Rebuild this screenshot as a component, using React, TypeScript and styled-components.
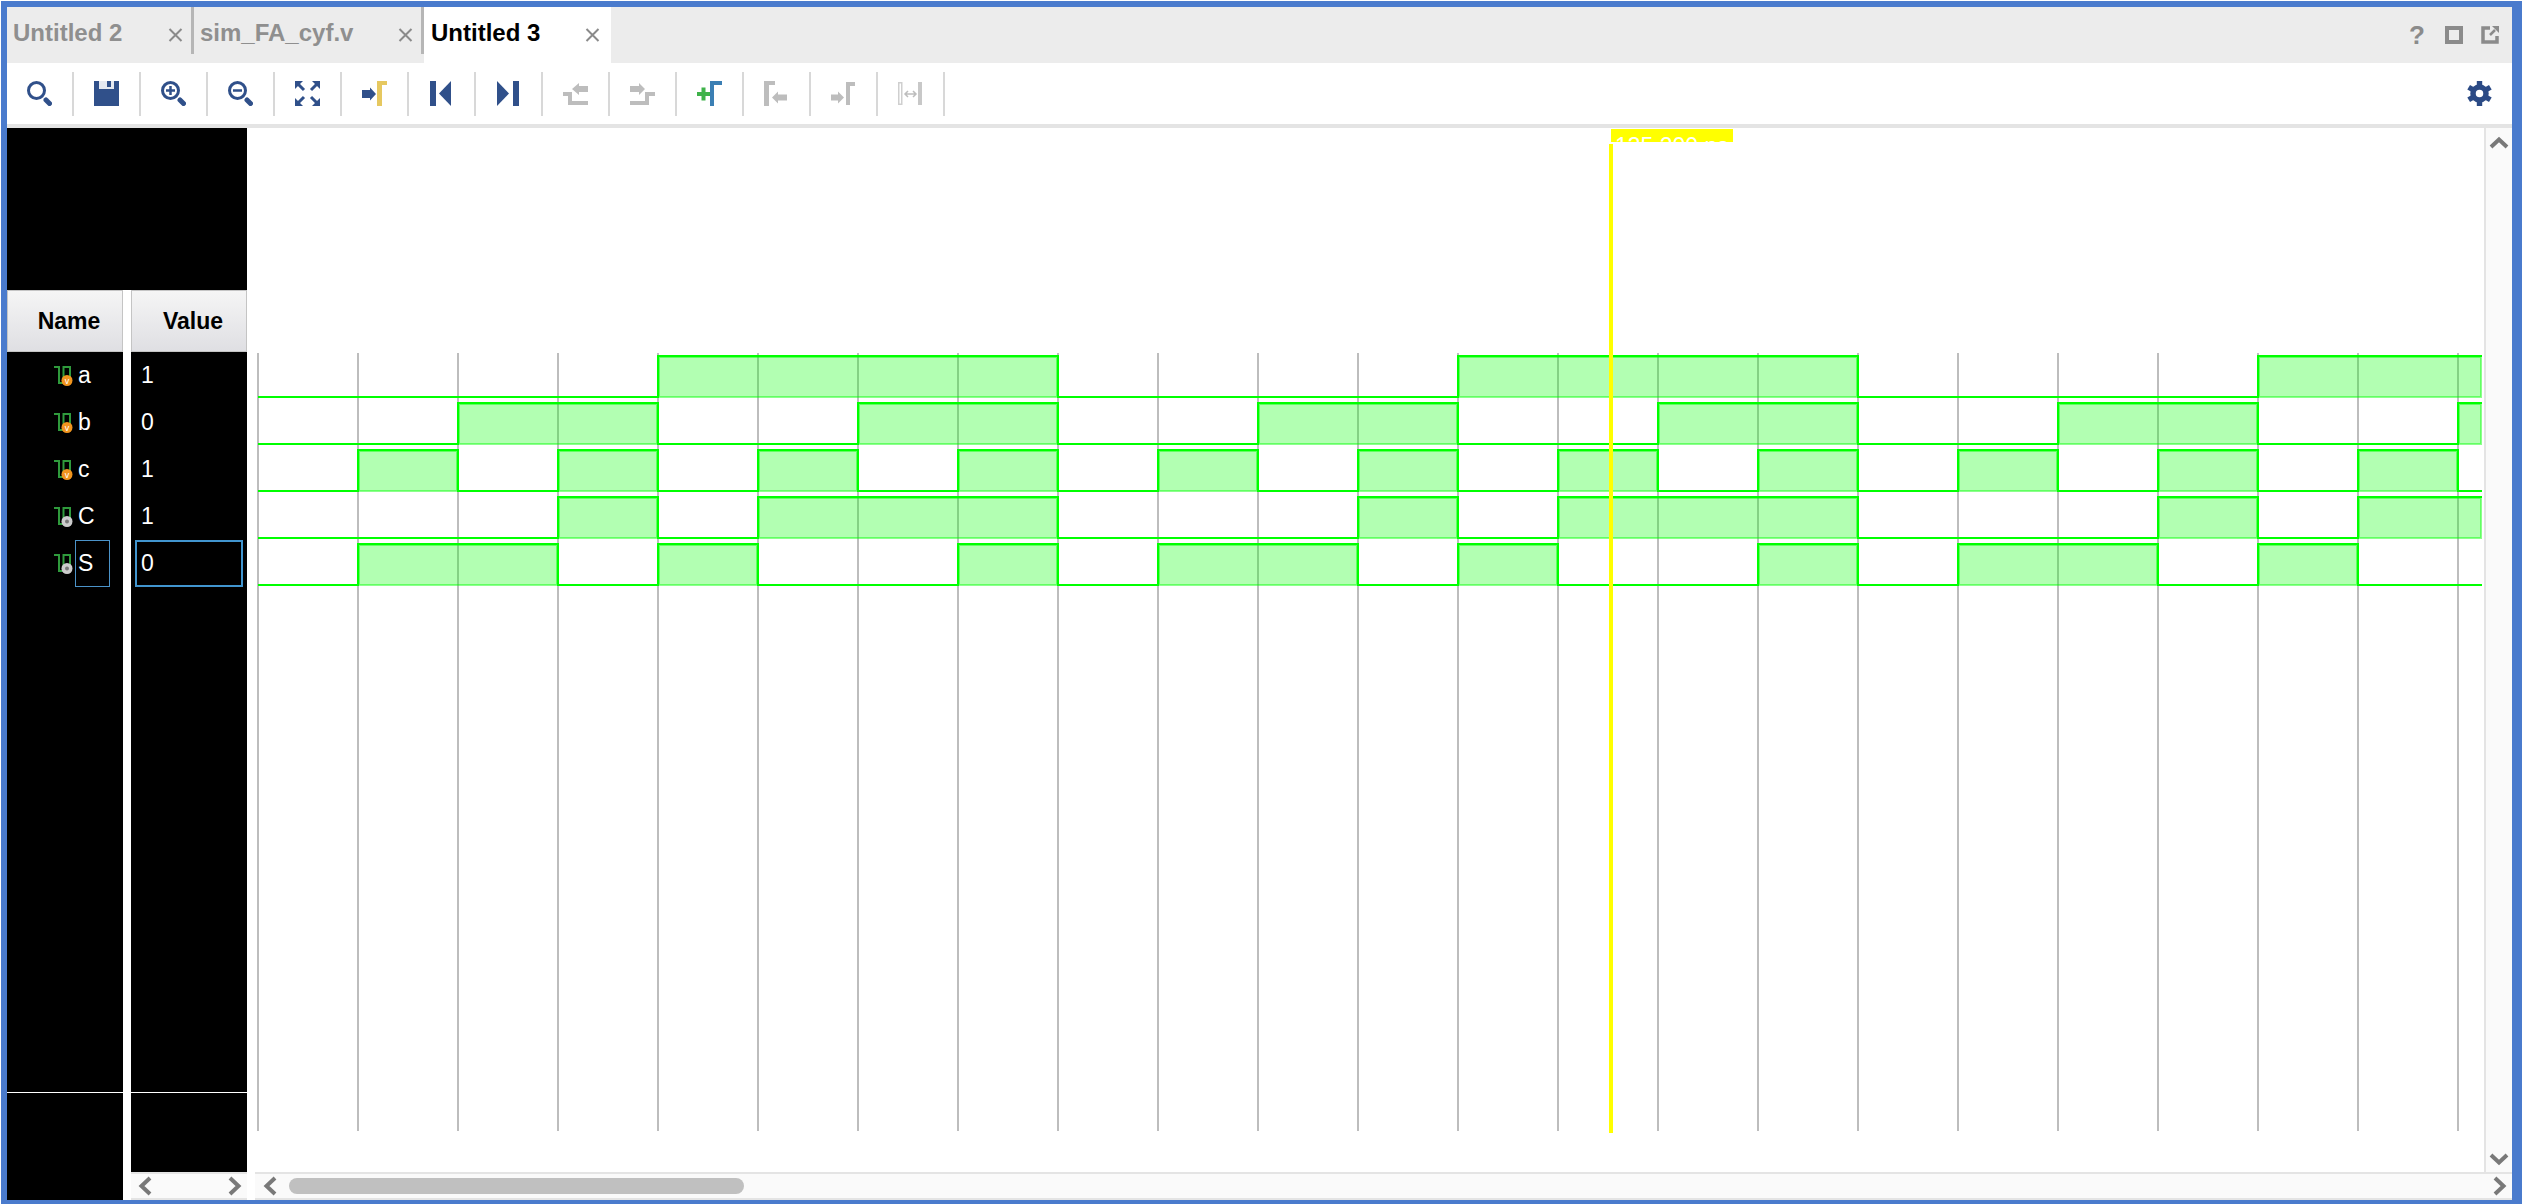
import React from 'react';
import styled, { createGlobalStyle } from 'styled-components';

const NAVY = '#30508a';
const GREY = '#bdbdbd';

const GlobalStyle = createGlobalStyle`
  html, body {
    margin: 0;
    background: #fff;
  }
  body {
    font-family: "Liberation Sans", Arial, sans-serif;
  }
`;

const Frame = styled.div`
  box-sizing: border-box;
  display: flex;
  flex-direction: column;
  width: 2521px;
  height: 1203px;
  margin: 1px 0 0 1px;
  border: solid #4a7bcd;
  border-width: 6px 10px 4px 6px;
  overflow: hidden;
`;

const TabBar = styled.div`
  display: flex;
  align-items: flex-start;
  height: 56px;
  flex: none;
  background: #ececec;
`;

const Tab = styled.div<{ $width: number; $active?: boolean; $pad: number }>`
  box-sizing: border-box;
  display: flex;
  align-items: center;
  width: ${(p) => p.$width}px;
  height: 56px;
  padding: 0 ${(p) => (p.$active ? 11 : 8)}px 0 ${(p) => p.$pad}px;
  background: ${(p) => (p.$active ? '#fff' : 'transparent')};
  color: ${(p) => (p.$active ? '#000' : '#8f8f8f')};
  font-size: 24px;
  font-weight: 700;
`;

const TabLabel = styled.span`
  flex: 1;
  margin-bottom: 4px;
  white-space: nowrap;
`;

const TabDivider = styled.div`
  width: 3px;
  height: 47px;
  flex: none;
  background: #b6b6b6;
`;

const WindowTools = styled.div`
  display: flex;
  align-items: center;
  gap: 18px;
  height: 56px;
  margin-left: auto;
  padding-right: 13px;
  color: #8b8b8b;
`;

const HelpMark = styled.span`
  width: 18px;
  margin-right: 1px;
  font-size: 26px;
  font-weight: 700;
  line-height: 18px;
  text-align: center;
`;

const Toolbar = styled.div`
  display: flex;
  align-items: center;
  height: 61px;
  flex: none;
  padding-right: 20px;
  background: #fff;
  border-bottom: 4px solid #e4e4e4;
`;

const ToolButton = styled.div`
  display: flex;
  align-items: center;
  justify-content: center;
  width: 65px;
  height: 61px;
  flex: none;
`;

const ToolSeparator = styled.div`
  width: 2px;
  height: 44px;
  flex: none;
  background: #d8d8d8;
`;

const Settings = styled.div`
  display: flex;
  margin-left: auto;
`;

const Main = styled.div`
  display: flex;
  flex: 1;
  min-height: 0;
`;

const SignalPanel = styled.div`
  display: flex;
  flex-direction: column;
  width: 240px;
  flex: none;
`;

const BlackBlock = styled.div`
  height: 162px;
  flex: none;
  background: #000;
`;

const Columns = styled.div`
  display: flex;
  justify-content: space-between;
  flex: 1;
`;

const ColumnWrap = styled.div`
  display: flex;
  flex-direction: column;
  width: 116px;
`;

const Column = styled.div`
  display: flex;
  flex-direction: column;
  flex: 1;
  background: #000;
  color: #fff;
  font-size: 23px;
`;

const ColumnHeader = styled.div`
  box-sizing: border-box;
  display: flex;
  align-items: center;
  justify-content: center;
  height: 62px;
  flex: none;
  padding-left: 8px;
  border: 1px solid #c4c4c4;
  background: linear-gradient(#f5f5f5, #dfdfe3);
  color: #000;
  font-size: 23px;
  font-weight: 700;
`;

const ColumnFoot = styled.div<{ $height: number }>`
  box-sizing: border-box;
  height: ${(p) => p.$height}px;
  margin-top: auto;
  border-top: 1px solid #fff;
`;

const NameRow = styled.div`
  display: flex;
  align-items: center;
  height: 47px;
  padding-left: 47px;
`;

const SignalGlyph = styled.svg`
  display: block;
  width: 21px;
  height: 21px;
  flex: none;
`;

const NameLabel = styled.div<{ $selected?: boolean }>`
  box-sizing: border-box;
  display: flex;
  align-items: center;
  width: 35px;
  height: 47px;
  padding-left: 2px;
  border: 1px solid ${(p) => (p.$selected ? '#4b93c9' : 'transparent')};
`;

const ValueCell = styled.div<{ $selected?: boolean }>`
  box-sizing: border-box;
  display: flex;
  align-items: center;
  width: 108px;
  height: 47px;
  margin-left: 4px;
  padding-left: 4px;
  border: 2px solid ${(p) => (p.$selected ? '#4195cf' : 'transparent')};
`;

const WavePanel = styled.div`
  display: flex;
  flex-direction: column;
  flex: 1;
  min-width: 0;
`;

const WaveRow = styled.div`
  display: flex;
  flex: 1;
  min-height: 0;
`;

const WaveCanvas = styled.svg`
  display: block;
  width: 2237px;
  height: 1044px;
  flex: none;
`;

const VScroll = styled.div`
  box-sizing: border-box;
  display: flex;
  flex-direction: column;
  align-items: center;
  justify-content: space-between;
  flex: 1;
  padding: 8px 0 6px;
  border-left: 2px solid #e4e4e4;
  background: #fafafa;
`;

const HScroll = styled.div<{ $inset: number }>`
  box-sizing: border-box;
  display: flex;
  align-items: center;
  justify-content: space-between;
  height: 28px;
  flex: none;
  margin-left: ${(p) => p.$inset}px;
  padding: 0 5px 0 ${(p) => (p.$inset ? 8 : 7)}px;
  border: solid #e4e4e4;
  border-width: 2px 0;
  background: #fafafa;
`;

const ScrollThumb = styled.div`
  width: 455px;
  height: 16px;
  margin: 0 auto 0 12px;
  border-radius: 8px;
  background: #c0c0c0;
`;

const CloseIcon = () => (
  <svg width="15" height="14" viewBox="0 0 15 14" style={{ flex: 'none' }}>
    <path d="M1.5 1L13.5 13M13.5 1L1.5 13" stroke="#8a8a8a" strokeWidth="2" fill="none" />
  </svg>
);

const PopOutIcon = () => (
  <svg width="18" height="18" viewBox="0 0 18 18">
    <path d="M9 2H2V16H16V10" stroke="#8b8b8b" strokeWidth="3.5" fill="none" />
    <path d="M9 9L14 4" stroke="#8b8b8b" strokeWidth="2.5" />
    <path d="M11 0H18V7Z" fill="#8b8b8b" />
  </svg>
);

const SquareIcon = () => (
  <svg width="18" height="18" viewBox="0 0 18 18">
    <rect x="2" y="2" width="14" height="14" fill="none" stroke="#8b8b8b" strokeWidth="4" />
  </svg>
);

const Icon = ({ children }: { children: React.ReactNode }) => (
  <svg width="25" height="25" viewBox="0 0 25 25">
    {children}
  </svg>
);

const Lens = ({ mark }: { mark?: 'plus' | 'minus' }) => (
  <Icon>
    <circle cx="9.5" cy="9.5" r="8" fill="none" stroke={NAVY} strokeWidth="3" />
    <path d="M19 19L22.5 22.5" stroke={NAVY} strokeWidth="5" strokeLinecap="round" />
    {mark && <path d="M5 9.5H14" stroke={NAVY} strokeWidth="2.5" />}
    {mark === 'plus' && <path d="M9.5 5V14" stroke={NAVY} strokeWidth="2.5" />}
  </Icon>
);

const toolIcons: React.ReactNode[] = [
  <Lens key="search" />,
  <Icon key="save">
    <rect width="25" height="25" fill={NAVY} />
    <rect x="5" width="15" height="8" fill="#e4e8f0" />
    <rect x="13" width="4" height="6" fill={NAVY} />
  </Icon>,
  <Lens key="in" mark="plus" />,
  <Lens key="out" mark="minus" />,
  <Icon key="fit">
    <g fill={NAVY}>
      <path d="M0 0H8L0 8Z" />
      <path d="M25 0H17L25 8Z" />
      <path d="M0 25H8L0 17Z" />
      <path d="M25 25H17L25 17Z" />
    </g>
    <path d="M3 3L9 9M22 3L16 9M3 22L9 16M22 22L16 16" stroke={NAVY} strokeWidth="3" />
  </Icon>,
  <Icon key="goto">
    <path d="M0 9H8V6.5L14 13L8 19.5V17H0Z" fill={NAVY} />
    <path d="M15 0H25V4H20V25H15Z" fill="#e6c860" />
  </Icon>,
  <Icon key="first">
    <rect x="1" width="6" height="25" fill={NAVY} />
    <path d="M22 0V25L10 12.5Z" fill={NAVY} />
  </Icon>,
  <Icon key="last">
    <path d="M1 0V25L13 12.5Z" fill={NAVY} />
    <rect x="17" width="6" height="25" fill={NAVY} />
  </Icon>,
  <Icon key="prev-edge">
    <path d="M0 13H7V22H25" stroke={GREY} strokeWidth="4" fill="none" />
    <path d="M25 5H16V2L9 8L16 14V11H25Z" fill={GREY} />
  </Icon>,
  <Icon key="next-edge">
    <path d="M0 22H17V13H25" stroke={GREY} strokeWidth="4" fill="none" />
    <path d="M0 5H9V2L15 8L9 14V11H0Z" fill={GREY} />
  </Icon>,
  <Icon key="add-marker">
    <path d="M4.5 6.5H8.5V11H13V15H8.5V19.5H4.5V15H0V11H4.5Z" fill="#3fb24a" />
    <path d="M13 0H25V4H17V25H13Z" fill="#3b7fb4" />
  </Icon>,
  <Icon key="prev-marker">
    <path d="M0 0H11V4H5V25H0Z" fill={GREY} />
    <path d="M23 13.5H14V10.5L8 16.5L14 22.5V19.5H23Z" fill={GREY} />
  </Icon>,
  <Icon key="next-marker">
    <path d="M0 13.5H7V10.5L13 16.5L7 22.5V19.5H0Z" fill={GREY} />
    <path d="M15 1H24V5H19V24H15Z" fill={GREY} />
  </Icon>,
  <Icon key="swap">
    <rect x="0.75" y="1.75" width="3" height="21.5" fill="none" stroke="#cfcfcf" strokeWidth="1.5" />
    <rect x="20" y="1" width="4" height="23" fill="#c8c8c8" />
    <path d="M7 13H18M10 10L7 13L10 16M15 10L18 13L15 16" fill="none" stroke={GREY} strokeWidth="1.5" />
  </Icon>,
];

const GearIcon = () => (
  <svg width="25" height="25" viewBox="0 0 25 25">
    <circle cx="12.5" cy="12.5" r="6.5" fill="none" stroke="#2b4a85" strokeWidth="5.5" />
    {[0, 60, 120, 180, 240, 300].map((angle) => (
      <rect key={angle} x="9.8" y="0" width="5.4" height="5" fill="#2b4a85" transform={`rotate(${angle} 12.5 12.5)`} />
    ))}
  </svg>
);

const Chevron = ({ dir }: { dir: 'left' | 'right' | 'up' | 'down' }) => {
  const paths = {
    left: 'M12 2L3.5 10L12 18',
    right: 'M2 2L10.5 10L2 18',
    up: 'M2 11L10 3.5L18 11',
    down: 'M2 2L10 9.5L18 2',
  };
  const flat = dir === 'up' || dir === 'down';
  return (
    <svg width={flat ? 20 : 14} height={flat ? 13 : 20} viewBox={flat ? '0 0 20 13' : '0 0 14 20'} style={{ flex: 'none' }}>
      <path d={paths[dir]} fill="none" stroke="#797979" strokeWidth="4" />
    </svg>
  );
};

const SignalIcon = ({ output }: { output: boolean }) => (
  <SignalGlyph viewBox="0 0 21 21">
    <path d="M0 2H5V18H9.5V2H16V14" fill="none" stroke="#2f9a3c" strokeWidth="2" />
    {output ? (
      <>
        <circle cx="13" cy="15.5" r="5.5" fill="#cccccc" />
        <circle cx="13" cy="15.5" r="2" fill="#777" />
      </>
    ) : (
      <>
        <circle cx="13" cy="15.5" r="5.5" fill="#f0941e" />
        <text x="13" y="18.5" fontSize="9" fill="#fff" textAnchor="middle" fontFamily="Liberation Sans">v</text>
      </>
    )}
  </SignalGlyph>
);

// the adder truth table, one bit per 100px cell
const CELLS = Array.from({ length: 23 }, (_, i) => i);
const bitA = (i: number) => (i >> 2) & 1;
const bitB = (i: number) => (i >> 1) & 1;
const bitC = (i: number) => i & 1;
const sum = (i: number) => bitA(i) ^ bitB(i) ^ bitC(i);
const carry = (i: number) => (bitA(i) + bitB(i) + bitC(i) > 1 ? 1 : 0);

const signals = [
  { name: 'a', value: '1', output: false, bit: bitA },
  { name: 'b', value: '0', output: false, bit: bitB },
  { name: 'c', value: '1', output: false, bit: bitC },
  { name: 'C', value: '1', output: true, bit: carry },
  { name: 'S', value: '0', output: true, bit: sum },
];

const WAVE_START = 258;
const WAVE_END = 2482;
const cellX = (i: number) => Math.min(WAVE_START + i * 100, WAVE_END);

const Wave = ({ bit, row }: { bit: (i: number) => number; row: number }) => {
  const high = 356 + row * 47;
  const low = high + 41;
  const runs: [number, number][] = [];
  let line = `M${WAVE_START} ${bit(0) ? high : low}`;
  CELLS.forEach((i) => {
    if (i > 0 && bit(i) !== bit(i - 1)) line += `V${bit(i) ? high : low}`;
    line += `H${cellX(i + 1)}`;
    if (bit(i)) {
      if (i > 0 && bit(i - 1)) runs[runs.length - 1][1] = cellX(i + 1);
      else runs.push([cellX(i), cellX(i + 1)]);
    }
  });
  return (
    <>
      {runs.map(([from, to]) => (
        <rect
          key={from}
          x={from + 1}
          y={high + 1}
          width={to - from - 2}
          height={low - high - 1}
          fill="rgba(0,255,0,0.3)"
          stroke="rgba(0,255,0,0.45)"
          strokeWidth="2"
        />
      ))}
      <path d={line} fill="none" stroke="#00ff00" strokeWidth="2" />
    </>
  );
};

export default function App() {
  return (
    <>
      <GlobalStyle />
      <Frame>
        <TabBar>
          <Tab $width={184} $pad={6}>
            <TabLabel>Untitled 2</TabLabel>
            <CloseIcon />
          </Tab>
          <TabDivider />
          <Tab $width={227} $pad={6}>
            <TabLabel>sim_FA_cyf.v</TabLabel>
            <CloseIcon />
          </Tab>
          <TabDivider />
          <Tab $width={187} $pad={7} $active>
            <TabLabel>Untitled 3</TabLabel>
            <CloseIcon />
          </Tab>
          <WindowTools>
            <HelpMark>?</HelpMark>
            <SquareIcon />
            <PopOutIcon />
          </WindowTools>
        </TabBar>

        <Toolbar>
          {toolIcons.map((icon, i) => (
            <React.Fragment key={i}>
              <ToolButton>{icon}</ToolButton>
              <ToolSeparator />
            </React.Fragment>
          ))}
          <Settings>
            <GearIcon />
          </Settings>
        </Toolbar>

        <Main>
          <SignalPanel>
            <BlackBlock />
            <Columns>
              <ColumnWrap>
                <ColumnHeader>Name</ColumnHeader>
                <Column>
                  {signals.map((s) => (
                    <NameRow key={s.name}>
                      <SignalIcon output={s.output} />
                      <NameLabel $selected={s.name === 'S'}>{s.name}</NameLabel>
                    </NameRow>
                  ))}
                  <ColumnFoot $height={108} />
                </Column>
              </ColumnWrap>
              <ColumnWrap>
                <ColumnHeader>Value</ColumnHeader>
                <Column>
                  {signals.map((s) => (
                    <ValueCell key={s.name} $selected={s.name === 'S'}>{s.value}</ValueCell>
                  ))}
                  <ColumnFoot $height={80} />
                </Column>
                <HScroll $inset={0}>
                  <Chevron dir="left" />
                  <Chevron dir="right" />
                </HScroll>
              </ColumnWrap>
            </Columns>
          </SignalPanel>

          <WavePanel>
            <WaveRow>
              <WaveCanvas viewBox="247 128 2237 1044">
                <defs>
                  <clipPath id="cursor-label">
                    <rect x="1611" y="129" width="122" height="13" />
                  </clipPath>
                </defs>
                {CELLS.map((i) => (
                  <rect key={i} x={WAVE_START + i * 100 - 1} y="353" width="2" height="778" fill="#bdbdbd" />
                ))}
                {signals.map((s, row) => (
                  <Wave key={s.name} bit={s.bit} row={row} />
                ))}
                <rect x="1611" y="129" width="122" height="13" fill="#ffff00" />
                <text x="1615" y="154" fontSize="23" fill="#fff" fontFamily="Liberation Sans" clipPath="url(#cursor-label)">
                  135.200 ns
                </text>
                <rect x="1609" y="144" width="4" height="989" fill="#ffff00" />
              </WaveCanvas>
              <VScroll>
                <Chevron dir="up" />
                <Chevron dir="down" />
              </VScroll>
            </WaveRow>
            <HScroll $inset={8}>
              <Chevron dir="left" />
              <ScrollThumb />
              <Chevron dir="right" />
            </HScroll>
          </WavePanel>
        </Main>
      </Frame>
    </>
  );
}
